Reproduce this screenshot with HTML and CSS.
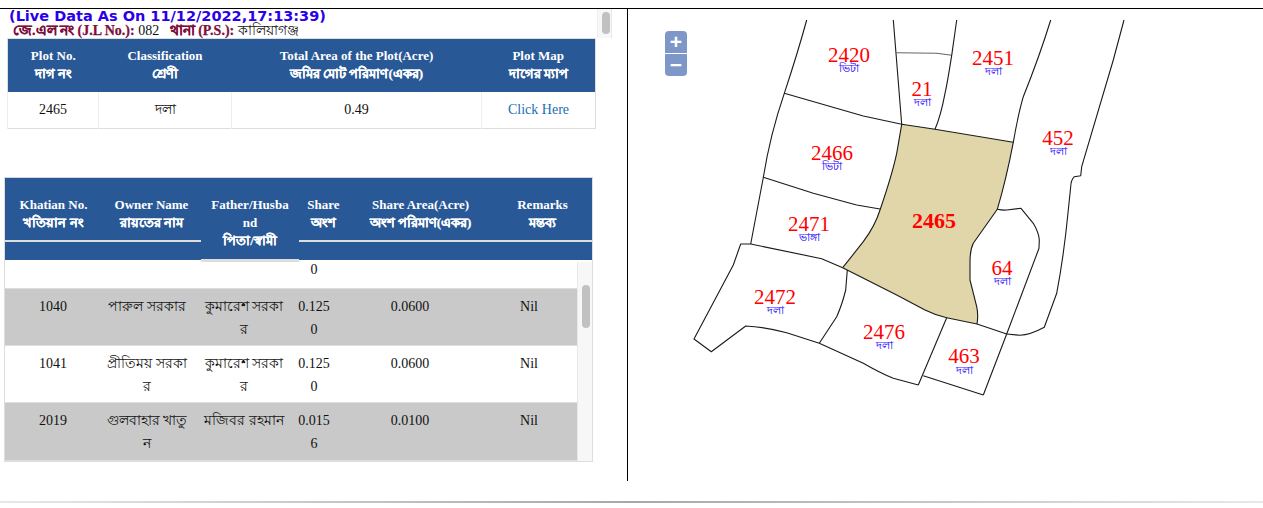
FILE: index.html
```html
<!DOCTYPE html>
<html lang="en">

<head>
    <meta charset="utf-8">
    <title>Plot Information</title>
    <link rel="stylesheet" href="styles.css">
</head>

<body>
    <main class="page">
        <section class="info">
            <div class="summary">
                <div class="summary-head">
                    <div class="live">(Live Data As On 11/12/2022,17:13:39)</div>
                    <div class="jl"><b class="bn">জে.এল নং (J.L No.):</b> 082 &nbsp; <b class="bn">থানা (P.S.):</b> কালিয়াগঞ্জ</div>
                </div>
                <div class="bar"><span class="bar-thumb"></span></div>
            </div>
            <table class="plot">
                <colgroup>
                    <col class="p1">
                    <col class="p2">
                    <col class="p3">
                    <col class="p4">
                </colgroup>
                <thead>
                    <tr>
                        <th>Plot No.<br><span class="bn">দাগ নং</span></th>
                        <th>Classification<br><span class="bn">শ্রেণী</span></th>
                        <th>Total Area of the Plot(Acre)<br><span class="bn">জমির মোট পরিমাণ(একর)</span></th>
                        <th>Plot Map<br><span class="bn">দাগের ম্যাপ</span></th>
                    </tr>
                </thead>
                <tbody>
                    <tr>
                        <td>2465</td>
                        <td>দলা</td>
                        <td>0.49</td>
                        <td><a href="#">Click Here</a></td>
                    </tr>
                </tbody>
            </table>

            <div class="owners">
                <table class="owners-head">
                    <colgroup>
                        <col class="h1">
                        <col class="h2">
                        <col class="h3">
                        <col class="h4">
                        <col class="h5">
                        <col class="h6">
                    </colgroup>
                    <tr class="head-top">
                        <th>Khatian No.<br><span class="bn">খতিয়ান নং</span></th>
                        <th>Owner Name<br><span class="bn">রায়তের নাম</span></th>
                        <th rowspan="2" class="father">Father/Husband<br><span class="bn">পিতা/স্বামী</span></th>
                        <th>Share<br><span class="bn">অংশ</span></th>
                        <th>Share Area(Acre)<br><span class="bn">অংশ পরিমাণ(একর)</span></th>
                        <th>Remarks<br><span class="bn">মন্তব্য</span></th>
                    </tr>
                    <tr class="head-gap">
                        <td colspan="2"></td>
                        <td colspan="3"></td>
                    </tr>
                </table>
                <div class="owners-scroll">
                    <table class="owners-body">
                        <colgroup>
                            <col class="b1">
                            <col class="b2">
                            <col class="b3">
                            <col class="b4">
                            <col class="b5">
                            <col class="b6">
                        </colgroup>
                        <tr class="cut">
                            <td></td>
                            <td></td>
                            <td></td>
                            <td>0</td>
                            <td></td>
                            <td></td>
                        </tr>
                        <tr class="alt">
                            <td>1040</td>
                            <td class="name">পারুল সরকার</td>
                            <td class="name">কুমারেশ সরকা<br>র</td>
                            <td>0.1250</td>
                            <td>0.0600</td>
                            <td>Nil</td>
                        </tr>
                        <tr>
                            <td>1041</td>
                            <td class="name">প্রীতিময় সরকা<br>র</td>
                            <td class="name">কুমারেশ সরকা<br>র</td>
                            <td>0.1250</td>
                            <td>0.0600</td>
                            <td>Nil</td>
                        </tr>
                        <tr class="alt">
                            <td>2019</td>
                            <td class="name">গুলবাহার খাতু<br>ন</td>
                            <td class="name">মজিবর রহমান</td>
                            <td>0.0156</td>
                            <td>0.0100</td>
                            <td>Nil</td>
                        </tr>
                    </table>
                    <div class="track"><span class="thumb"></span></div>
                </div>
            </div>
        </section>

        <section class="map">
            <div class="zoom">
                <a class="zoom-btn" href="#">+</a>
                <a class="zoom-btn" href="#">&minus;</a>
            </div>
            <svg class="sheet" width="635" height="472" viewBox="628 9 635 472">
                <path class="focus" d="M901.7 124.3 L935 129.3 L1013.3 142.3 Q1006 180 997.3 209.3 L973.3 243.3 Q970 250 970 262 L970 280 L976.7 306.7 Q978.5 315 977 324 L946.7 317.7 Q935 315 925 310 L896.7 295 L842.7 267.7 L863.3 241.7 Q875 226 880 210 Q892 175 896.7 153.3 Z"/>
                <path class="edge" d="M806.7 20 Q798 52 784.3 93.3 Q770 135 763.3 177.5 L750.7 244"/>
                <path class="edge" d="M784.3 93.3 L863.3 116 L901.7 124.3"/>
                <path class="edge" d="M893.3 20 L896 53.3 L901.7 124.3"/>
                <path class="edge thin" d="M896 52.7 L936.7 53.3 L951.7 55.3"/>
                <path class="edge" d="M956.7 20 L951.7 55.3 Q947 85 945 93.3 Q941 115 935 129.3"/>
                <path class="edge" d="M1050.7 20 Q1040 55 1023.3 96.7 Q1018 115 1013.3 142.3"/>
                <path class="edge" d="M1124 20 L1113.3 60 L1081.7 166.7 L1080.7 175.7 L1074.3 176.7 Q1071 180 1070.7 186.7 L1068.3 210 Q1064 255 1056.7 293.3 L1044.3 327.3 Q1030 335 1020 335.3 L1006.7 334"/>
                <path class="edge" d="M997.3 209.3 Q1003 210.5 1006.7 210 L1021 208.3 L1033.3 223.3 Q1039 233 1039.3 240 L1039 248.3 L1006.7 334 L983.3 395"/>
                <path class="edge" d="M977 324 L1006.7 334"/>
                <path class="edge" d="M946.7 317.7 L918.3 385"/>
                <path class="edge" d="M923.3 375.7 L983.3 395"/>
                <path class="edge" d="M819.3 343.3 L863.3 363.3 Q880 373 893.3 378.3 L918.3 385"/>
                <path class="edge" d="M740.7 244 L750.7 244 L821.7 258.7 L842.7 267.7"/>
                <path class="edge" d="M740.7 244 L733.3 265 L694 339 L711.3 351.7 L745.7 326 Q765 327 786.7 332.7 L819.3 343.3"/>
                <path class="edge" d="M847.3 270 L845.7 290 Q842 305 836.7 316.7 L819.3 343.3"/>
                <path class="edge" d="M763.3 177.3 L813.3 193.3 L856.7 205 L880 209"/>

                <text class="num" x="849" y="62">2420</text>
                <text class="kind" x="849" y="72">ভিটা</text>
                <text class="num" x="922" y="96">21</text>
                <text class="kind" x="922" y="106">দলা</text>
                <text class="num" x="993" y="65">2451</text>
                <text class="kind" x="993" y="75">দলা</text>
                <text class="num" x="1058" y="145">452</text>
                <text class="kind" x="1058" y="155">দলা</text>
                <text class="num" x="832" y="160">2466</text>
                <text class="kind" x="832" y="170">ভিটা</text>
                <text class="num" x="809" y="231">2471</text>
                <text class="kind" x="809" y="241">ভাঙ্গা</text>
                <text class="num" x="775" y="304">2472</text>
                <text class="kind" x="775" y="314">দলা</text>
                <text class="num" x="884" y="339">2476</text>
                <text class="kind" x="884" y="349">দলা</text>
                <text class="num" x="1002" y="275">64</text>
                <text class="kind" x="1002" y="285">দলা</text>
                <text class="num" x="964" y="363">463</text>
                <text class="kind" x="964" y="374">দলা</text>
                <text class="num main" x="934" y="228">2465</text>
            </svg>
        </section>
    </main>
    <hr class="rule">
</body>

</html>
```

FILE: styles.css
```css
* {
    box-sizing: border-box;
}

body {
    margin: 8px 0 0;
    font-family: "Liberation Serif", "Noto Sans", serif;
    font-size: 14px;
    color: #111;
    background: #fff;
}

table {
    border-collapse: collapse;
    table-layout: fixed;
}

.bn {
    -webkit-text-stroke: 0.25px currentColor;
}

.page {
    display: flex;
    height: 473px;
    border-top: 1px solid #000;
}

.info {
    width: 628px;
    flex: none;
    border-right: 1px solid #000;
}

.summary {
    display: flex;
    height: 29px;
}

.summary-head {
    width: 597px;
    padding-left: 9px;
}

.live {
    height: 14px;
    font-family: "DejaVu Sans", sans-serif;
    font-size: 14.5px;
    font-weight: bold;
    line-height: 14px;
    color: #2a00e8;
}

.jl {
    padding-left: 4px;
    font-size: 14px;
    line-height: 15px;
}

.jl b {
    color: #7d0f3c;
}

.bar {
    width: 15px;
    height: 29px;
    padding: 3px 0 0 4px;
    background: #f7f7f7;
    border-right: 1px solid #e8e8e8;
    border-left: 1px solid #efefef;
}

.bar-thumb {
    display: block;
    width: 8px;
    height: 22px;
    border-radius: 4px;
    background: #c1c1c1;
}

.plot {
    width: 588px;
    margin-left: 7px;
    border: 1px solid #ddd;
    text-align: center;
}

.p1 {
    width: 91px;
}

.p2 {
    width: 133px;
}

.p3 {
    width: 250px;
}

.p4 {
    width: 114px;
}

.plot th {
    height: 53px;
    padding: 0;
    font-size: 13px;
    line-height: 18px;
    color: #fff;
    background: #295896;
}

.plot td {
    height: 37px;
    padding: 0;
    font-size: 14px;
    border-left: 1px solid #eee;
}

.plot a {
    color: #1a6fb0;
    text-decoration: none;
}

.owners {
    width: 589px;
    margin: 48px 0 0 4px;
    border: 1px solid #ddd;
    border-top-color: #cfd6e0;
}

.owners-head {
    width: 587px;
    text-align: center;
}

.h1 {
    width: 97px;
}

.h2 {
    width: 99px;
}

.h3 {
    width: 98px;
}

.h4 {
    width: 49px;
}

.h5 {
    width: 145px;
}

.h6 {
    width: 99px;
}

.owners-head th,
.head-gap td {
    padding: 0;
    color: #fff;
    background: #295896;
}

.owners-head th {
    font-size: 13px;
    line-height: 18px;
    word-break: break-all;
}

.head-top th {
    height: 63px;
    padding: 18px 3px 0;
    vertical-align: top;
    border-bottom: 2px solid #ddd;
}

.head-top .father {
    padding: 18px 8px 0;
    border-bottom: 3px solid #ddd;
}

.head-gap td {
    height: 19px;
}

.owners-scroll {
    display: flex;
    height: 199px;
    overflow: hidden;
}

.owners-body {
    width: 572px;
    flex: none;
    text-align: center;
}

.b1 {
    width: 96px;
}

.b2 {
    width: 92px;
}

.b3 {
    width: 102px;
}

.b4 {
    width: 38px;
}

.b5 {
    width: 154px;
}

.b6 {
    width: 90px;
}

.owners-body td {
    height: 56px;
    padding: 6px 4px 0;
    font-size: 14px;
    line-height: 23px;
    vertical-align: top;
    word-break: break-all;
    border-bottom: 1px solid #ddd;
}

.owners-body td:nth-child(4) {
    padding: 6px 2px 0;
}

.owners-body td:nth-child(6) {
    padding-right: 10px;
}

.owners-body .name {
    padding: 6px 0 0;
    white-space: nowrap;
}

.owners-body .cut td {
    height: 27px;
    padding-top: 0;
    line-height: 16px;
}

.alt td {
    background: #c9c9c9;
}

.track {
    flex: 1;
    padding: 23px 0 0 4px;
    background: #f7f7f7;
    border-left: 1px solid #e8e8e8;
}

.thumb {
    display: block;
    width: 8px;
    height: 43px;
    border-radius: 4px;
    background: #c1c1c1;
}

.map {
    position: relative;
    flex: 1;
    overflow: hidden;
}

.sheet {
    display: block;
}

.zoom {
    position: absolute;
    top: 22px;
    left: 37px;
    width: 22px;
    border-radius: 4px;
    overflow: hidden;
    background: #fff;
}

.zoom-btn {
    display: block;
    height: 22px;
    font-family: "Liberation Sans", sans-serif;
    font-size: 21px;
    font-weight: bold;
    line-height: 21px;
    color: #fff;
    text-align: center;
    text-decoration: none;
    background: #7d97c8;
}

.zoom-btn + .zoom-btn {
    margin-top: 1px;
}

.focus {
    fill: #e0d6aa;
    stroke: #1a1a1a;
    stroke-width: 1.1;
    stroke-linejoin: round;
}

.edge {
    fill: none;
    stroke: #1a1a1a;
    stroke-width: 1.1;
    stroke-linejoin: round;
}

.thin {
    stroke: #666;
}

.num {
    font-size: 21px;
    fill: #f00;
    text-anchor: middle;
}

.main {
    font-size: 22px;
    font-weight: bold;
}

.kind {
    font-size: 10.5px;
    fill: #3311ff;
    stroke: #3311ff;
    stroke-width: 0.15;
    text-anchor: middle;
}

.rule {
    height: 2px;
    margin: 20px 0 0;
    border: none;
    background: linear-gradient(to right, #e8e8e8, #a8a8a8 50%, #e8e8e8);
}
```
